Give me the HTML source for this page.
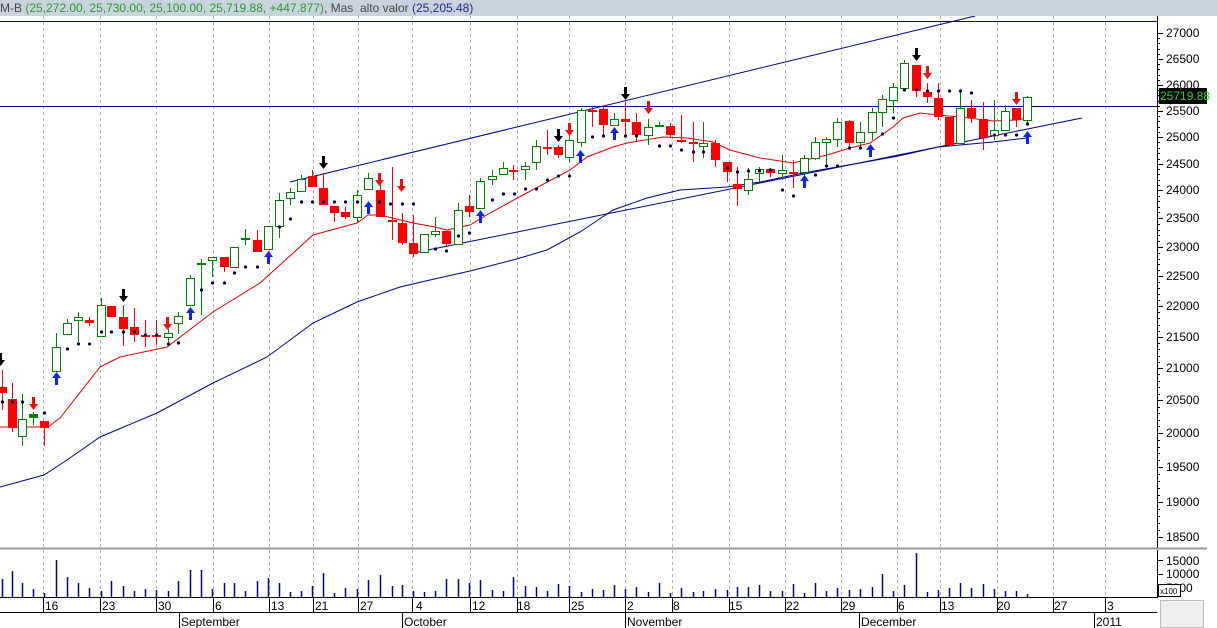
<!DOCTYPE html>
<html><head><meta charset="utf-8"><style>
html,body{margin:0;padding:0;width:1217px;height:628px;overflow:hidden;background:#fff;font-family:"Liberation Sans",sans-serif}
#t{position:absolute;left:0;top:0;width:1217px;height:16px;background:#c9d3de;font-size:12px;line-height:16px;white-space:nowrap;color:#444}
.g{color:#2a9a2a}.n{color:#1a2a8a}
svg{position:absolute;left:0;top:0}
</style></head><body>
<svg id="s" width="1217" height="628" viewBox="0 0 1217 628" font-family="Liberation Sans, sans-serif" font-size="12">
<rect x="0" y="16" width="1217" height="612" fill="#fff"/>
<g id="grid" stroke="#b0b0b0" stroke-dasharray="3,3" stroke-width="1"></g>
<g id="lines"></g>
<g id="cand"></g>
<g id="misc"></g>
<line x1="1157.5" y1="16" x2="1157.5" y2="549" stroke="#000"/>
<g id="ticks" stroke="#000"></g>
<g fill="#000" font-size="12">
<text x="1166" y="37">27000</text><text x="1166" y="63">26500</text><text x="1166" y="89">26000</text>
<text x="1166" y="115">25500</text><text x="1166" y="141">25000</text><text x="1166" y="168">24500</text>
<text x="1166" y="194">24000</text><text x="1166" y="222">23500</text><text x="1166" y="251">23000</text>
<text x="1166" y="280">22500</text><text x="1166" y="310">22000</text><text x="1166" y="341">21500</text>
<text x="1166" y="372">21000</text><text x="1166" y="404">20500</text><text x="1166" y="437">20000</text>
<text x="1166" y="471">19500</text><text x="1166" y="506">19000</text><text x="1166" y="541">18500</text>
</g>
<rect x="1159" y="88" width="48" height="16" fill="#000"/>
<text x="1160" y="100" fill="#22dd22" font-size="12">25719.88</text>
<line x1="0" y1="548.5" x2="1207" y2="548.5" stroke="#999" stroke-width="2"/>
<line x1="1157.5" y1="550" x2="1157.5" y2="598" stroke="#000"/>
<g fill="#000" font-size="12"><text x="1166" y="565">15000</text><text x="1166" y="578">10000</text><text x="1166" y="592">5000</text></g>
<rect x="1158.5" y="584.5" width="22" height="12" fill="#fff" stroke="#000"/>
<text x="1160" y="594" font-size="8">x100</text>
<rect x="1160.5" y="600.5" width="43" height="27" fill="#eee" stroke="#bbb"/>
<g id="vol" stroke="#00008b" stroke-width="1.5"></g>
<line x1="0" y1="597.5" x2="1157" y2="597.5" stroke="#000"/>
<line x1="0" y1="612.5" x2="1157" y2="612.5" stroke="#000"/>
<g id="dticks" stroke="#000"></g>
<g fill="#000" font-size="12">
<text x="45" y="610">16</text><text x="102" y="610">23</text><text x="158" y="610">30</text><text x="215" y="610">6</text>
<text x="271" y="610">13</text><text x="315" y="610">21</text><text x="360" y="610">27</text><text x="416" y="610">4</text>
<text x="472" y="610">12</text><text x="517" y="610">18</text><text x="571" y="610">25</text><text x="627" y="610">2</text>
<text x="673" y="610">8</text><text x="729" y="610">15</text><text x="786" y="610">22</text><text x="842" y="610">29</text>
<text x="898" y="610">6</text><text x="941" y="610">13</text><text x="997" y="610">20</text><text x="1054" y="610">27</text>
<text x="1107" y="610">3</text>
<text x="181" y="626">September</text><text x="404" y="626">October</text><text x="627" y="626">November</text>
<text x="861" y="626">December</text><text x="1096" y="626">2011</text>
</g>
<line x1="179.5" y1="613" x2="179.5" y2="628" stroke="#000"/>
<line x1="402.5" y1="613" x2="402.5" y2="628" stroke="#000"/>
<line x1="625.5" y1="613" x2="625.5" y2="628" stroke="#000"/>
<line x1="859.5" y1="613" x2="859.5" y2="628" stroke="#000"/>
<line x1="1094.5" y1="613" x2="1094.5" y2="628" stroke="#000"/>
<rect x="1173.5" y="1.5" width="13" height="12" fill="#e8e8e8" stroke="#555"/>
<rect x="1176.5" y="4.5" width="7" height="6" fill="none" stroke="#000"/>
<rect x="1188.5" y="1.5" width="13" height="12" fill="#e8e8e8" stroke="#555"/>
<path d="M1191 4 L1199 12 M1199 4 L1191 12" stroke="#000" stroke-width="1.5"/>
</svg>
<div id="t">M-B <span class="g">(25,272.00, 25,730.00, 25,100.00, 25,719.88, +447.877)</span>, Mas&nbsp; alto valor <span class="n">(25,205.48)</span></div>
<script>
var NS="http://www.w3.org/2000/svg";
function el(p,n,a){var e=document.createElementNS(NS,n);for(var k in a)e.setAttribute(k,a[k]);p.appendChild(e);return e;}
var G=document.getElementById('grid');
[43,100,156,213,269,313,358,412,470,517,569,625,672,729,785,841,897,940,997,1053,1105].forEach(function(x){
 el(G,'line',{x1:x+.5,y1:16,x2:x+.5,y2:548});el(G,'line',{x1:x+.5,y1:550,x2:x+.5,y2:597});
 el(document.getElementById('dticks'),'line',{x1:x+.5,y1:597,x2:x+.5,y2:612});
});
var T=document.getElementById('ticks');
var ys=[33,59,85,111,137,164,190,218,247,276,306,337,368,400,433,467,502,537];
ys.forEach(function(y){el(T,'line',{x1:1157,y1:y+.5,x2:1163,y2:y+.5});});
for(var i=0;i<ys.length-1;i++){for(var j=1;j<5;j++){var y=Math.round(ys[i]+(ys[i+1]-ys[i])*j/5)+.5;el(T,'line',{x1:1157,y1:y,x2:1160,y2:y});}}
[560,574,587].forEach(function(y){el(T,'line',{x1:1157,y1:y+.5,x2:1163,y2:y+.5});});
var L=document.getElementById('lines');
el(L,'line',{x1:0,y1:21.5,x2:1157,y2:21.5,stroke:'#00008b'});
el(L,'line',{x1:0,y1:106.5,x2:1157,y2:106.5,stroke:'#00008b'});
el(L,'line',{x1:290,y1:182,x2:975,y2:16,stroke:'#00008b'});
el(L,'line',{x1:413,y1:253,x2:1082,y2:118,stroke:'#00008b'});
function pl(pts,c){el(L,'polyline',{points:pts.map(function(p){return p.join(',')}).join(' '),fill:'none',stroke:c,'stroke-width':1});}
pl([[0,427],[48,427],[60,418],[100,367],[120,357],[167,347],[213,312],[260,283],[313,235],[357,223],[368,215],[380,215],[413,223],[435,227],[447,230],[470,225],[490,213],[523,195],[570,170],[587,157],[613,147],[627,143],[663,137],[687,138],[713,142],[730,150],[760,158],[793,163],[827,155],[850,148],[870,143],[893,127],[903,118],[920,113],[938,115],[960,117],[993,121],[1017,120],[1027,118]],'#e00000');
pl([[0,487],[44,475],[67,460],[100,437],[157,413],[213,383],[267,357],[313,323],[357,302],[400,287],[430,280],[470,271],[513,260],[547,250],[580,232],[613,210],[647,198],[680,190],[727,187],[760,182],[803,173],[860,163],[893,157],[903,155],[938,147],[993,142],[1027,138]],'#00008b');
var C=[[2,387,393,370,410,'r'],[12,399,428,383,432,'r'],[22,419,436,394,446,'g'],[33,414,418,412,425,'f'],[44,421,428,421,446,'r'],
[56,347,371,333,371,'g'],[67,323,334,319,334,'g'],[78,317,320,312,342,'g'],[89,320,323,317,326,'r'],[101,305,336,298,336,'g'],
[111,306,317,306,317,'r'],[123,317,329,305,346,'r'],[134,327,335,308,342,'r'],[145,335,336,320,347,'r'],[156,335,336,320,345,'r'],
[168,333,337,329,345,'g'],[178,316,323,312,334,'g'],[190,278,305,275,305,'g'],[201,263,265,259,315,'f'],[212,257,260,257,277,'g'],
[224,257,267,257,272,'r'],[234,247,267,247,267,'g'],[245,238,239,229,245,'f'],[257,240,252,230,252,'r'],[268,226,249,226,249,'g'],
[279,200,226,193,238,'g'],[290,192,198,188,205,'g'],[301,179,191,175,191,'g'],[312,176,187,170,187,'r'],[323,188,205,173,205,'r'],
[334,206,213,206,222,'r'],[345,212,217,207,219,'r'],[357,195,217,190,222,'g'],[368,178,189,173,189,'g'],[380,190,217,173,217,'r'],
[392,220,222,167,240,'r'],[402,223,243,213,245,'r'],[413,243,254,215,257,'r'],[424,234,252,234,252,'g'],[435,231,234,217,237,'g'],
[446,231,244,231,247,'r'],[458,210,244,203,244,'g'],[469,206,212,195,217,'r'],[480,181,208,178,208,'g'],[492,176,179,170,185,'g'],
[503,168,174,162,174,'g'],[513,170,171,165,180,'r'],[525,166,169,162,180,'g'],[536,146,162,140,170,'g'],[547,147,148,130,155,'r'],
[558,147,155,145,158,'r'],[569,140,157,135,162,'g'],[581,110,142,108,147,'g'],[592,110,111,107,127,'r'],[603,109,125,107,135,'r'],
[614,119,125,113,125,'g'],[625,119,122,102,137,'r'],[636,122,135,113,142,'r'],[648,127,135,119,145,'g'],[659,125,126,122,127,'f'],
[670,126,135,123,138,'r'],[681,140,142,115,143,'r'],[693,142,143,122,162,'r'],[703,143,146,122,158,'g'],[715,143,160,140,167,'r'],
[727,162,172,162,182,'r'],[737,184,189,167,206,'r'],[748,179,190,168,195,'g'],[759,169,173,167,182,'g'],[770,169,173,168,177,'r'],
[782,170,173,155,180,'g'],[793,172,174,160,188,'r'],[804,158,172,155,177,'g'],[815,142,158,137,160,'g'],[826,139,142,137,167,'g'],
[837,122,139,118,147,'g'],[849,121,143,120,150,'r'],[860,132,142,122,148,'g'],[872,112,132,108,140,'g'],[882,99,112,95,127,'g'],
[893,87,100,83,113,'g'],[904,63,88,60,90,'g'],[916,65,91,65,97,'r'],[927,92,97,83,103,'r'],[938,98,117,83,120,'r'],
[949,117,145,117,145,'r'],[960,108,143,92,143,'g'],[971,108,118,100,123,'r'],[983,119,138,102,150,'r'],[994,130,135,100,140,'g'],
[1005,111,130,105,130,'g'],[1016,108,120,108,127,'r'],[1027,97,120,96,123,'g']];
var CG=document.getElementById('cand');
C.forEach(function(c){var x=c[0],col=c[5]=='r'?'#ff0000':'#008000';
 el(CG,'line',{x1:x+.5,y1:c[3],x2:x+.5,y2:c[4],stroke:col});
 var h=Math.max(c[2]-c[1],1);
 if(c[5]=='g')el(CG,'rect',{x:x-3.5,y:c[1]+.5,width:8,height:h,fill:'#fff',stroke:col});
 else el(CG,'rect',{x:x-4,y:c[1],width:9,height:Math.max(h,2),fill:col});
});
var M=document.getElementById('misc');
var D=[[2,402],[12,402],[22,402],[44,413],[67,349],[78,344],[89,344],[101,332],[111,332],[123,332],[134,332],[145,335],[156,335],[168,344],[178,343],[201,290],[212,283],[224,283],[234,273],[245,267],[257,267],[279,227],[290,219],[301,202],[312,202],[323,202],[334,202],[345,202],[357,202],[379,202],[390,204],[402,204],[413,204],[435,249],[446,251],[458,236],[469,233],[492,200],[503,194],[514,194],[525,189],[536,189],[547,180],[558,176],[569,176],[592,137],[603,136],[625,136],[636,136],[659,146],[670,146],[681,150],[693,152],[703,152],[727,168],[737,172],[748,171],[759,171],[770,170],[782,190],[793,196],[815,175],[826,166],[837,166],[849,148],[860,148],[882,134],[893,118],[904,90],[916,90],[927,91],[938,91],[949,91],[960,91],[971,93],[994,135],[1005,135],[1016,135],[1027,124]];
D.forEach(function(d){el(M,'circle',{cx:d[0]+.5,cy:d[1],r:1.6,fill:'#00004a'});});
function arrow(x,y,dir,col){var s=dir>0?1:-1;
 el(M,'path',{d:'M'+(x-1)+' '+(y-7*s)+' h3 v'+(7*s)+' h3 l-4.5 '+(6*s)+' l-4.5 '+(-6*s)+' h3 z',fill:col});}
[[0,360],[123,296],[323,163],[558,136],[625,94],[916,55]].forEach(function(a){arrow(a[0],a[1],1,'#000');});
[[33,404],[167,324],[379,180],[401,186],[569,130],[648,108],[927,73],[1016,99]].forEach(function(a){arrow(a[0],a[1],1,'#ee1111');});
[[56,378],[190,313],[268,257],[368,207],[480,216],[580,156],[614,133],[804,181],[870,150],[1027,137]].forEach(function(a){arrow(a[0],a[1],-1,'#1122ee');});
var V=document.getElementById('vol');
var vh=[18,26,14,8,4,37,20,14,9,6,16,11,6,8,7,6,16,27,27,8,14,14,6,16,19,14,5,6,11,24,4,9,8,17,22,11,12,6,5,6,18,18,14,17,7,6,20,11,10,6,13,11,5,8,7,12,8,10,5,14,4,9,5,6,8,7,10,10,12,6,6,13,4,14,6,9,7,8,10,23,6,12,44,5,7,9,14,9,13,8,6,6,3,2];
for(var i=0;i<C.length;i++){var x=C[i][0]+.5,h=vh[i]||4;el(V,'line',{x1:x,y1:597,x2:x,y2:597-h});}
</script>
</body></html>
